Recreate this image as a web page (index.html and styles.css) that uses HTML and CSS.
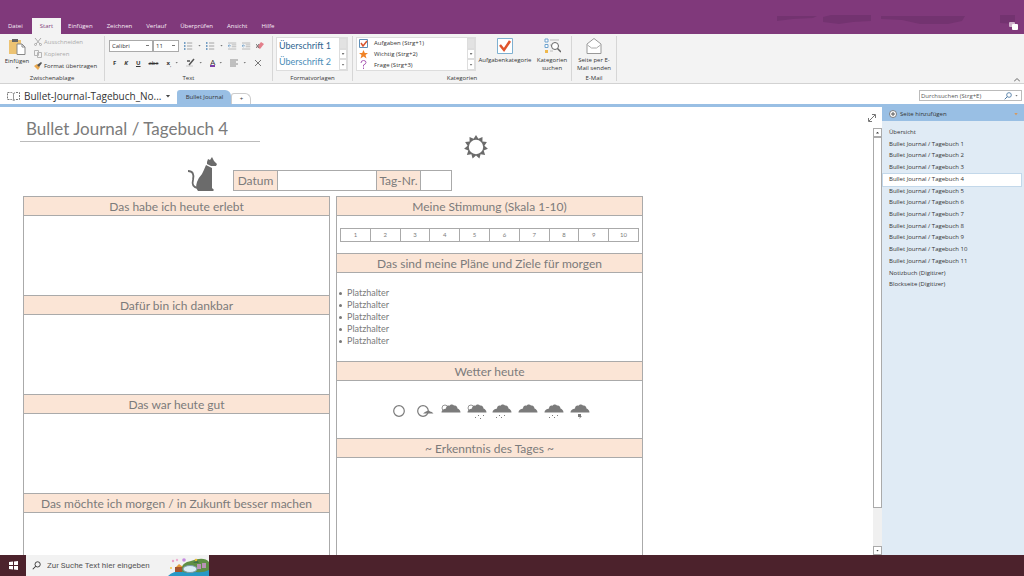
FILE: index.html
```html
<!DOCTYPE html>
<html lang="de">

<head>
  <meta charset="UTF-8">
  <meta name="viewport" content="width=device-width, initial-scale=1.0">
  <title>Bullet Journal / Tagebuch 4</title>
  <link rel="stylesheet" href="styles.css">
</head>

<body>
  <!-- shared shapes -->
  <svg class="defs" aria-hidden="true">
    <symbol id="cloud" viewBox="0 0 20 9">
      <path d="M.5 8.500C.5 6 3 5 5 4.500C5 2 7 1 8.500 1.700C9.500 0 12 0 13 1.500C15 1 16.500 2.500 16.500 4.500C18 5 19.500 6.500 19.500 8.500Z" />
    </symbol>
    <symbol id="list" viewBox="0 0 12 10">
      <path d="M0 1h2M0 5h2M0 9h2" stroke="#4b83b5" stroke-width="2" />
      <path d="M4 1h7M4 5h7M4 9h7" stroke="#8c8c8c" />
    </symbol>
    <symbol id="indent" viewBox="0 0 12 10">
      <path d="M0 1h11M5 3.500h6M5 6h6M0 9h11" stroke="#a8a8a8" />
      <path d="M4 4.700H0M2 3L0 4.700L2 6.500" stroke="#6f9fc9" fill="none" />
    </symbol>
    <symbol id="glass" viewBox="0 0 12 12">
      <circle cx="7.500" cy="4.500" r="3.500" fill="none" stroke="currentColor" stroke-width="1.200" />
      <path d="M5 7L1 11" stroke="currentColor" stroke-width="1.400" />
    </symbol>
  </svg>

  <header class="titlebar">
    <nav class="tabs">
      <button class="tab">Datei</button>
      <button class="tab active">Start</button>
      <button class="tab">Einfügen</button>
      <button class="tab">Zeichnen</button>
      <button class="tab">Verlauf</button>
      <button class="tab">Überprüfen</button>
      <button class="tab">Ansicht</button>
      <button class="tab">Hilfe</button>
    </nav>
    <svg class="smudges" viewBox="0 0 240 16" aria-hidden="true">
      <path d="M2 2h40l-4 2l-20 1l-16 2zM48 3l8-2h40v6l-18 1l-14 2l-16-2zM106 2h84l-3 5l-14 3h-28l-18-4l-21-1zM225 1h15v9l-15-1z" />
    </svg>
    <svg class="chat" viewBox="0 0 9 9" aria-hidden="true">
      <rect x="0" y="0" width="6" height="5" rx="1" fill="#cfb2cb" />
      <rect x="3" y="2" width="6" height="6" rx="1" fill="#fff" />
    </svg>
  </header>

  <section class="ribbon">
    <div class="group clipboard">
      <div class="group-body">
        <button class="big">
          <svg width="18" height="17" viewBox="0 0 18 17">
            <rect x="1" y="2" width="12" height="14" fill="#edc373" />
            <path d="M4 1h6v3H4z" fill="#666" />
            <path d="M9 6h5l3 3v7.500H9z" fill="#fff" stroke="#888" />
            <path d="M14 6v3h3" fill="none" stroke="#888" />
          </svg>
          <span>Einfügen</span>
          <i class="caret"></i>
        </button>
        <div class="clip-actions">
          <button disabled>
            <svg width="8" height="8" viewBox="0 0 8 8"><path d="M1 0l5 6M7 0L2 6" stroke="#aaa" /><circle cx="1.500" cy="6.500" r="1" fill="none" stroke="#aaa" /><circle cx="6.500" cy="6.500" r="1" fill="none" stroke="#aaa" /></svg>
            Ausschneiden
          </button>
          <button disabled>
            <svg width="8" height="8" viewBox="0 0 8 8"><path d="M.5.5h4v5h-4zM3.500 2.500h4v5h-4z" fill="#f4f4f4" stroke="#b5b5b5" /></svg>
            Kopieren
          </button>
          <button>
            <svg width="8" height="8" viewBox="0 0 8 8"><path d="M0 4l3-2l3 3l-2 3z" fill="#eba94e" /><path d="M3 3l2 2l3-4l-1-1z" fill="#555" /></svg>
            Format übertragen
          </button>
        </div>
      </div>
      <div class="group-name">Zwischenablage</div>
    </div>

    <div class="group text">
      <div class="group-body rows">
        <div class="tools">
          <select class="font" aria-label="Schriftart"><option>Calibri</option></select>
          <select class="size" aria-label="Schriftgrad"><option>11</option></select>
          <button aria-label="Aufzählung"><svg width="9" height="8"><use href="#list" /></svg></button><i class="caret"></i>
          <button aria-label="Nummerierung"><svg width="9" height="8"><use href="#list" /></svg></button><i class="caret"></i>
          <button aria-label="Einzug verkleinern"><svg width="9" height="8"><use href="#indent" /></svg></button>
          <button aria-label="Einzug vergrößern"><svg width="9" height="8"><use href="#indent" /></svg></button>
          <button aria-label="Formatierung löschen">
            <svg width="8" height="8" viewBox="0 0 8 8"><path d="M1 5l4-5l3 2l-4 5z" fill="#e37f8b" /><path d="M0 2l3 4M0 6l3-4" stroke="#777" /></svg>
          </button>
        </div>
        <div class="tools letters">
          <button><b>F</b></button>
          <button><b><i>K</i></b></button>
          <button><b><u>U</u></b></button>
          <button><s>abc</s></button>
          <button><b>x</b><sub>,</sub></button><i class="caret"></i>
          <button aria-label="Texthervorhebung">
            <svg width="9" height="9" viewBox="0 0 9 9"><path d="M0 8h7" stroke="#ddd" stroke-width="2" /><path d="M1 3h3M3 7l5-6" stroke="#555" stroke-width="1.500" /></svg>
          </button><i class="caret"></i>
          <button class="color" aria-label="Schriftfarbe">A</button><i class="caret"></i>
          <button aria-label="Ausrichtung">
            <svg width="9" height="8" viewBox="0 0 9 8"><path d="M0 1h8M0 3h6M0 5h8M0 7h6" stroke="#8c8c8c" /></svg>
          </button><i class="caret"></i>
          <button aria-label="Löschen">
            <svg width="8" height="8" viewBox="0 0 8 8"><path d="M1 1l6 6M7 1L1 7" stroke="#777" /></svg>
          </button>
        </div>
      </div>
      <div class="group-name">Text</div>
    </div>

    <div class="group styles">
      <div class="group-body">
        <div class="gallery">
          <div class="choices">
            <button class="h1-style">Überschrift 1</button>
            <button class="h2-style">Überschrift 2</button>
          </div>
          <div class="spinner"><button aria-label="Hoch"></button><button aria-label="Runter"><i class="caret"></i></button><button aria-label="Mehr"><i class="caret"></i></button></div>
        </div>
      </div>
      <div class="group-name">Formatvorlagen</div>
    </div>

    <div class="group categories">
      <div class="group-body">
        <div class="gallery wide">
          <div class="choices">
            <button>
              <svg width="9" height="9" viewBox="0 0 9 9"><path d="M.5.5h8v8h-8z" fill="#fff" stroke="#5f8fb8" /><path d="M2 4l2 3l4-5" fill="none" stroke="#d9532c" stroke-width="1.500" /></svg>
              Aufgaben (Strg+1)
            </button>
            <button>
              <svg width="9" height="9" viewBox="0 0 9 9"><path d="M4.500 0l1.300 3h3.200l-2.500 2l1 3.500l-3-2l-3 2l1-3.500L0 3h3.200z" fill="#f08326" /></svg>
              Wichtig (Strg+2)
            </button>
            <button>
              <svg width="9" height="9" viewBox="0 0 9 9"><path d="M2 3Q2 .5 4.500.5T7 2.500Q7 4 4.500 5v1.500M4.500 7.500v1.500" fill="none" stroke="#a95bb5" /></svg>
              Frage (Strg+3)
            </button>
          </div>
          <div class="spinner"><button aria-label="Hoch"></button><button aria-label="Runter"><i class="caret"></i></button><button aria-label="Mehr"><i class="caret"></i></button></div>
        </div>
        <button class="big task">
          <svg width="16" height="16" viewBox="0 0 16 16"><path d="M.5.5h15v15H.5z" fill="#fff" stroke="#7fb0d0" /><path d="M3 7l4 5l6-9" fill="none" stroke="#e0542c" stroke-width="2.500" /></svg>
          <span>Aufgabenkategorie</span>
        </button>
        <button class="big find">
          <svg width="17" height="16" viewBox="0 0 17 16">
            <path d="M1 1h3v3H1zM1 6.500h3v3H1z" fill="#fff" stroke="#6ea3cf" />
            <path d="M1 12h3v3H1z" fill="#efb84c" />
            <path d="M6 2h9M6 7h2M6 13h3" stroke="#bbb" />
            <circle cx="11" cy="8" r="3.500" fill="#fff" stroke="#666" /><path d="M13.500 10.500L17 14" stroke="#666" stroke-width="1.500" />
          </svg>
          <span>Kategorien<br>suchen</span>
        </button>
      </div>
      <div class="group-name">Kategorien</div>
    </div>

    <div class="group mail">
      <div class="group-body">
        <button class="big">
          <svg width="16" height="16" viewBox="0 0 16 16"><path d="M1 6l7-5.500L15 6v9.500H1z" fill="#fff" stroke="#999" /><path d="M1.500 7l4 3h5l4-3" fill="none" stroke="#aaa" /></svg>
          <span>Seite per E-<br>Mail senden</span>
        </button>
      </div>
      <div class="group-name">E-Mail</div>
    </div>
    <button class="collapse" aria-label="Menüband reduzieren">
      <svg width="6" height="4" viewBox="0 0 6 4"><path d="M0 3.500l3-3l3 3" fill="none" stroke="#666" /></svg>
    </button>
  </section>

  <div class="notebook-bar">
    <button class="notebook">
      <svg width="13" height="10" viewBox="0 0 13 10"><path d="M.5 1.500h4l2 1l2-1h4v7h-4l-2 1l-2-1h-4z" fill="none" stroke="#777" stroke-dasharray="2 1" /><path d="M6.500 2v7" stroke="#999" /></svg>
      <span>Bullet-Journal-Tagebuch_No...</span>
      <i class="caret dark"></i>
    </button>
    <button class="section">Bullet Journal</button>
    <button class="section add">+</button>
    <label class="search">
      <input type="text" placeholder="Durchsuchen (Strg+E)" aria-label="Durchsuchen">
      <svg width="8" height="8"><use href="#glass" /></svg>
      <i class="caret"></i>
    </label>
  </div>

  <main class="workspace">
    <article class="note">
      <div class="note-head">
        <h1>Bullet Journal / Tagebuch 4</h1>
        <svg class="sun" viewBox="0 0 24 24">
          <path fill="#6b6b6b" d="M12 0L14.400 3.800L18.500 1.900L18.400 6.400L22.900 7L20.400 10.800L23.900 13.700L19.700 15.500L21.100 19.900L16.600 19.200L15.400 23.500L12 20.500L8.600 23.500L7.400 19.200L2.900 19.900L4.300 15.500L.1 13.700L3.600 10.800L1.100 7L5.600 6.400L5.500 1.900L9.600 3.800Z" />
          <circle cx="12" cy="12" r="7.200" fill="#fff" />
        </svg>
      </div>
      <div class="date-row">
        <svg class="cat" viewBox="0 0 30 34">
          <path fill="#6b6b6b" d="M20 5L21 2L23 3L25 0L27 4L30 7L29 9L24 9L20 7ZM19 8L25 11Q25 16 25 20L25 31L27 33L26 34L11 34Q8 31 10 25Q12 20 15 17Q17 13 19 8Z" />
          <path d="M11 31Q4 30 6 23Q8 14 1 14" fill="none" stroke="#6b6b6b" stroke-width="1.800" />
        </svg>
        <table class="date">
          <tr>
            <th>Datum</th>
            <td class="date-value"></td>
            <th>Tag-Nr.</th>
            <td class="day-value"></td>
          </tr>
        </table>
      </div>

      <div class="journal">
        <div class="column">
          <h2>Das habe ich heute erlebt</h2>
          <div class="entry"></div>
          <h2>Dafür bin ich dankbar</h2>
          <div class="entry"></div>
          <h2>Das war heute gut</h2>
          <div class="entry"></div>
          <h2>Das möchte ich morgen / in Zukunft besser machen</h2>
          <div class="entry"></div>
        </div>
        <div class="column">
          <h2>Meine Stimmung (Skala 1-10)</h2>
          <div class="mood">
            <table>
              <tr><td>1</td><td>2</td><td>3</td><td>4</td><td>5</td><td>6</td><td>7</td><td>8</td><td>9</td><td>10</td></tr>
            </table>
          </div>
          <h2>Das sind meine Pläne und Ziele für morgen</h2>
          <ul class="plans">
            <li>Platzhalter</li>
            <li>Platzhalter</li>
            <li>Platzhalter</li>
            <li>Platzhalter</li>
            <li>Platzhalter</li>
          </ul>
          <h2>Wetter heute</h2>
          <div class="weather">
            <svg viewBox="0 0 20 16"><circle cx="10" cy="7" r="5.300" class="ring" /></svg>
            <svg viewBox="0 0 20 16"><circle cx="8" cy="7" r="5.300" class="ring" /><path d="M8 9.500q2-2 4-2.500q2-1 3 .5q2 0 3.500 2z" /></svg>
            <svg viewBox="0 0 20 16"><circle cx="4" cy="4" r="3" class="ring thin" /><use href="#cloud" width="20" height="9" /></svg>
            <svg viewBox="0 0 20 16"><circle cx="4" cy="4" r="3" class="ring thin" /><use href="#cloud" width="20" height="9" /><path class="rain" d="M8 14l1-1M11 12l1-1M13 15l1-1M16 12l1-1" /></svg>
            <svg viewBox="0 0 20 16"><use href="#cloud" width="20" height="9" /><path class="rain" d="M4 14l1-1M7 12l1-1M9 14l1-1M12 12l1-1" /></svg>
            <svg viewBox="0 0 20 16"><use href="#cloud" width="20" height="9" /></svg>
            <svg viewBox="0 0 20 16"><use href="#cloud" width="20" height="9" /><path class="rain" d="M5 14l1-1M8 12l1-1M10 14l1-1M13 12l1-1" /></svg>
            <svg viewBox="0 0 20 16"><use href="#cloud" width="20" height="9" /><path d="M8 10h3v2h1l-3 3l1-2H8z" /></svg>
          </div>
          <h2>~ Erkenntnis des Tages ~</h2>
          <div class="entry"></div>
        </div>
      </div>
    </article>

    <div class="scrollbar">
      <button class="expand" aria-label="Ganzseitenansicht">
        <svg width="8" height="8" viewBox="0 0 8 8"><path d="M1 7L7 1M4 .5h3.500V4M.5 4v3.500H4" fill="none" stroke="#777" /></svg>
      </button>
      <button class="arrow up" aria-label="Nach oben"></button>
      <div class="thumb"></div>
      <button class="arrow" aria-label="Nach unten"></button>
    </div>

    <aside class="pages">
      <button class="add-page">
        <svg width="8" height="8" viewBox="0 0 8 8"><circle cx="4" cy="4" r="3.500" fill="#fff" stroke="#666" stroke-width=".8" /><path d="M4 2v4M2 4h4" stroke="#555" /></svg>
        <span>Seite hinzufügen</span>
        <i class="caret orange"></i>
      </button>
      <nav>
        <a href="#">Übersicht</a>
        <a href="#">Bullet Journal / Tagebuch 1</a>
        <a href="#">Bullet Journal / Tagebuch 2</a>
        <a href="#">Bullet Journal / Tagebuch 3</a>
        <a href="#" class="current">Bullet Journal / Tagebuch 4</a>
        <a href="#">Bullet Journal / Tagebuch 5</a>
        <a href="#">Bullet Journal / Tagebuch 6</a>
        <a href="#">Bullet Journal / Tagebuch 7</a>
        <a href="#">Bullet Journal / Tagebuch 8</a>
        <a href="#">Bullet Journal / Tagebuch 9</a>
        <a href="#">Bullet Journal / Tagebuch 10</a>
        <a href="#">Bullet Journal / Tagebuch 11</a>
        <a href="#">Notizbuch (Digitizer)</a>
        <a href="#">Blockseite (Digitizer)</a>
      </nav>
    </aside>
  </main>

  <footer class="taskbar">
    <button class="start" aria-label="Start">
      <svg width="9" height="9" viewBox="0 0 9 9"><path d="M0 1l4-.5V4H0zM5 .4L9 0v4H5zM0 5h4v3.500L0 8zM5 5h4v4l-4-.5z" fill="#fff" /></svg>
    </button>
    <label class="task-search">
      <svg width="9" height="9"><use href="#glass" /></svg>
      <input type="text" placeholder="Zur Suche Text hier eingeben" aria-label="Suche">
      <svg class="island" viewBox="0 0 41 21">
        <path d="M0 21Q5 16 14 16T30 14T41 12V21Z" fill="#2799c6" />
        <path d="M12 16Q14 7 23 6Q36 1 41 7V15Q35 18 28 17Q18 19 12 16Z" fill="#5f8f45" />
        <ellipse cx="22" cy="14" rx="7" ry="3.500" fill="#d9edf5" stroke="#7a9bab" />
        <path d="M7 12h7v5H7z" fill="#a5552e" />
        <path d="M8 12l3-3l4 3z" fill="#e59a3c" />
        <path d="M29 9h4v5h-4zM34 8h4v5h-4z" fill="#b792b5" />
        <path d="M25 8l4-3l2 3z" fill="#3f7249" />
        <circle cx="16" cy="5" r="1.800" fill="#c58be0" /><circle cx="5" cy="6" r="1.200" fill="#e9a0c6" /><circle cx="9" cy="5" r="1.200" fill="#efb0d0" /><circle cx="28" cy="5" r="1.300" fill="#e7b93c" /><circle cx="3" cy="13" r="1" fill="#f0c548" />
      </svg>
    </label>
  </footer>
</body>

</html>
```
FILE: styles.css
```css
* {
  box-sizing: border-box;
}

body {
  margin: 0;
  height: 100vh;
  display: flex;
  flex-direction: column;
  overflow: hidden;
  background: #fff;
  color: #333;
  font: 6px/8px "Open Sans", "Noto Sans", sans-serif;
}

button,
input,
select {
  margin: 0;
  padding: 0;
  border: 0;
  background: none;
  color: inherit;
  font: inherit;
}

svg {
  display: block;
  flex: none;
}

.defs {
  position: absolute;
  width: 0;
  height: 0;
}

.caret {
  display: block;
  flex: none;
  width: 3px;
  height: 2px;
  background: #777;
  clip-path: polygon(0 0, 100% 0, 50% 100%);
}

.caret.dark {
  width: 5px;
  height: 3px;
  background: #444;
}

.caret.orange {
  width: 4px;
  height: 3px;
  margin-left: auto;
  background: #d39a62;
}

/* title bar */
.titlebar {
  flex: none;
  display: flex;
  align-items: flex-end;
  height: 34px;
  padding-right: 6px;
  background: #80397b;
}

.tabs {
  display: flex;
  padding-left: 1px;
}

.tab {
  height: 16px;
  padding: 0 7px;
  color: #f8eef7;
}

.tab.active {
  margin-left: 2px;
  padding: 0 8px;
  background: #f3f3f3;
  color: #80397b;
}

.smudges {
  width: 240px;
  height: 16px;
  margin: 0 -6px 4px auto;
  fill: #733370;
}

.chat {
  width: 9px;
  height: 9px;
  margin-bottom: 3px;
}

/* ribbon */
.ribbon {
  flex: none;
  display: flex;
  height: 50px;
  background: #f3f3f3;
  border-bottom: 1px solid #d2d2d2;
}

.group {
  display: flex;
  flex-direction: column;
  flex: none;
  margin: 2px 0;
  border-right: 1px solid #d6d6d6;
}

.group-body {
  display: flex;
  flex: 1;
}

.group-name {
  height: 7px;
  text-align: center;
}

.clipboard {
  width: 105px;
}

.text {
  width: 168px;
}

.styles {
  width: 80px;
}

.categories {
  width: 219px;
}

.mail {
  width: 45px;
}

.big {
  display: flex;
  flex-direction: column;
  align-items: center;
  gap: 2px;
  padding-top: 2px;
  white-space: nowrap;
}

.clipboard .big {
  width: 34px;
}

.mail .big {
  width: 100%;
}

.task {
  width: 58px;
}

.find {
  width: 36px;
}

.clip-actions {
  display: flex;
  flex-direction: column;
  gap: 4px;
  padding-top: 2px;
}

.clip-actions button {
  display: flex;
  gap: 2px;
  white-space: nowrap;
}

.clip-actions button:disabled {
  color: #aaa;
}

.rows {
  flex-direction: column;
  gap: 4px;
  padding: 3px 0 0 4px;
}

.tools {
  display: flex;
  align-items: center;
  gap: 5px;
  height: 13px;
}

.tools select {
  appearance: none;
  height: 12px;
  padding-left: 2px;
  border: 1px solid #aaa;
  background: #fff linear-gradient(#777, #777) right 3px center / 3px 1px no-repeat;
}

.font {
  width: 44px;
  margin-right: -5px;
}

.size {
  width: 26px;
}

.letters {
  gap: 8px;
  padding-left: 4px;
}

.letters .caret {
  margin-left: -4px;
}

.letters sub {
  line-height: 0;
}

.color {
  height: 9px;
  border-bottom: 2px solid #7b3fa8;
  font-size: 8px;
  line-height: 7px;
}

.gallery {
  display: flex;
  width: 72px;
  height: 34px;
  margin: 1px 0 0 3px;
  border: 1px solid #ddd;
  background: #fff;
}

.gallery.wide {
  width: 120px;
}

.choices {
  display: flex;
  flex-direction: column;
  flex: 1;
}

.choices button {
  display: flex;
  flex: 1;
  align-items: center;
  gap: 6px;
  padding-left: 2px;
  white-space: nowrap;
}

.choices .h1-style,
.choices .h2-style {
  color: #2f6590;
  font-family: Lato, sans-serif;
  font-size: 9px;
}

.choices .h2-style {
  color: #4a8db8;
}

.spinner {
  display: flex;
  flex-direction: column;
  width: 8px;
}

.spinner button {
  display: flex;
  flex: 1;
  align-items: center;
  justify-content: center;
  border: 1px solid #ddd;
}

.spinner button:first-child {
  background: #e2e2e2;
}

.collapse {
  align-self: flex-end;
  margin: 0 4px 1px auto;
}

/* notebook and section tabs */
.notebook-bar {
  flex: none;
  display: flex;
  align-items: flex-end;
  height: 23px;
  padding-left: 7px;
  border-bottom: 3px solid #99bfe4;
}

.notebook {
  display: flex;
  align-items: center;
  gap: 4px;
  height: 16px;
  margin-right: 7px;
  font-size: 10px;
  white-space: nowrap;
}

.section {
  width: 54px;
  height: 14px;
  border-radius: 3px 6px 0 0;
  background: #99bfe4;
}

.section.add {
  width: 20px;
  height: 11px;
  border: 1px solid #ccc;
  border-bottom: 0;
  background: #fff;
}

.search {
  display: flex;
  align-items: center;
  gap: 3px;
  width: 103px;
  height: 11px;
  margin: 0 2px 3px auto;
  padding: 0 3px 0 1px;
  border: 1px solid #bbb;
  color: #3f6f9c;
}

.search input {
  flex: 1;
  min-width: 0;
}

input::placeholder {
  color: #555;
  opacity: 1;
}

/* workspace */
.workspace {
  display: flex;
  flex: 1;
  min-height: 0;
}

.note {
  flex: 1;
  min-width: 0;
  overflow: hidden;
  padding: 13px 0 0 20px;
  color: #7b7b7b;
  font-family: Lato, sans-serif;
}

.note-head {
  display: flex;
  align-items: flex-start;
}

h1 {
  width: 240px;
  height: 22px;
  margin: 0;
  padding-left: 6px;
  border-bottom: 1px solid #bbb;
  font-size: 17px;
  font-weight: 400;
  line-height: 18px;
  white-space: nowrap;
}

.sun {
  width: 24px;
  height: 24px;
  margin: 15px 0 0 204px;
}

.date-row {
  display: flex;
  align-items: flex-end;
  margin: -2px 0 5px 167px;
}

.cat {
  width: 30px;
  height: 34px;
  margin-right: 16px;
}

table {
  border-collapse: collapse;
}

th,
td {
  padding: 0;
  border: 1px solid #aaa;
  font-weight: 400;
  text-align: center;
}

.date th {
  width: 44px;
  height: 20px;
  background: #fbe5d6;
  font-size: 12px;
}

.date-value {
  width: 99px;
}

.day-value {
  width: 31px;
}

.journal {
  display: flex;
  align-items: flex-start;
  gap: 6px;
  max-width: 623px;
  padding-left: 3px;
}

.column {
  flex: 1;
  border: 1px solid #aaa;
  border-top: 0;
}

h2 {
  height: 20px;
  margin: 0;
  border: 1px solid #aaa;
  border-width: 1px 0;
  background: #fbe5d6;
  font-size: 12px;
  font-weight: 400;
  line-height: 19px;
  text-align: center;
  white-space: nowrap;
}

.entry {
  height: 79px;
}

.column:last-child .entry {
  height: 154px;
}

.mood {
  height: 37px;
  padding: 12px 3px;
}

.mood table {
  width: 100%;
  table-layout: fixed;
}

.mood td {
  height: 13px;
}

.plans {
  height: 88px;
  margin: 0;
  padding: 14px 0 0 10px;
  font-size: 9px;
  line-height: 12px;
}

.plans li {
  list-style: none;
}

.plans li::before {
  content: "";
  float: left;
  width: 3px;
  height: 3px;
  margin: 5px 0 0 -8px;
  border-radius: 50%;
  background: #777;
}

.weather {
  display: flex;
  justify-content: space-between;
  height: 57px;
  padding: 23px 52px 0;
  fill: #7b7b7b;
}

.weather svg {
  width: 20px;
  height: 16px;
}

.ring {
  fill: none;
  stroke: #7b7b7b;
  stroke-width: 1.2;
}

.ring.thin {
  stroke-width: 0.8;
}

.rain {
  stroke: #7b7b7b;
}

/* scrollbar */
.scrollbar {
  display: flex;
  flex-direction: column;
  width: 9px;
  background: linear-gradient(#fff 21px, #f0f0f0 21px);
}

.expand {
  height: 21px;
  margin-left: -5px;
}

.arrow {
  display: flex;
  flex: none;
  align-items: center;
  justify-content: center;
  height: 9px;
  border: 1px solid #aaa;
  background: #fff;
}

.arrow::before {
  content: "";
  width: 3px;
  height: 2px;
  background: #444;
  clip-path: polygon(0 0, 100% 0, 50% 100%);
}

.arrow.up::before {
  clip-path: polygon(50% 0, 100% 100%, 0 100%);
}

.thumb {
  flex: 1;
  margin-bottom: 38px;
  border: 1px solid #aaa;
  background: #fff;
}

/* page list */
.pages {
  flex: none;
  width: 142px;
  background: #e0ebf5;
}

.add-page {
  display: flex;
  align-items: center;
  gap: 3px;
  width: 100%;
  height: 14px;
  padding: 0 6px 0 7px;
  background: #99bfe4;
}

.pages nav {
  display: flex;
  flex-direction: column;
  height: 170px;
  padding: 6px 3px 0 1px;
}

.pages a {
  flex: 1;
  padding-left: 6px;
  line-height: 11px;
  color: inherit;
  text-decoration: none;
}

.pages .current {
  background: #fff;
  outline: 1px solid #c3d8ea;
}

/* taskbar */
.taskbar {
  flex: none;
  display: flex;
  height: 21px;
  background: #4c222c;
}

.start {
  display: flex;
  align-items: center;
  justify-content: center;
  width: 26px;
}

.task-search {
  display: flex;
  align-items: center;
  gap: 6px;
  width: 183px;
  padding-left: 6px;
  background: #f2f2f2;
}

.task-search input {
  flex: 1;
  min-width: 0;
  font-family: Roboto, sans-serif;
  font-size: 8px;
}

.island {
  width: 41px;
  height: 21px;
}
```
